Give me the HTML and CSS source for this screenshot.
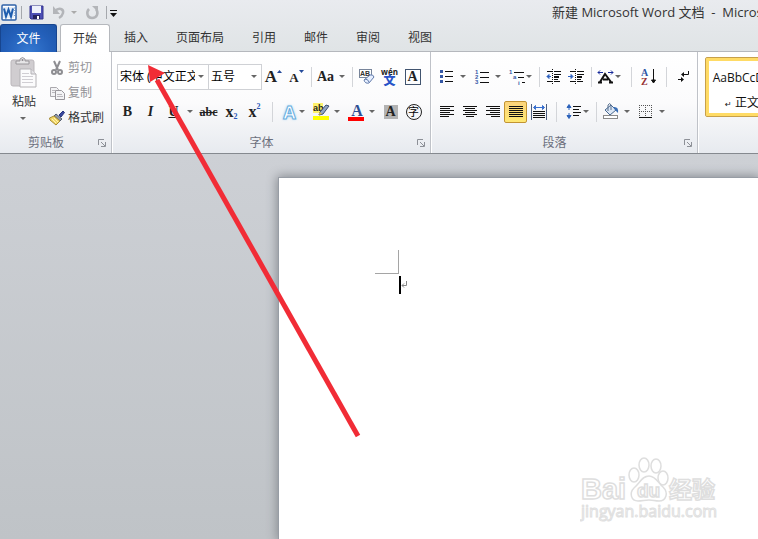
FILE: index.html
```html
<!DOCTYPE html>
<html lang="zh-CN">
<head>
    <meta charset="UTF-8">
    <meta name="viewport" content="width=device-width, initial-scale=1.0">
    <title>新建 Microsoft Word 文档</title>
    <link rel="stylesheet" href="styles.css">
</head>
<body>
<!-- Title bar with quick access tools -->
<header class="titlebar">
    <div class="quick">
        <svg class="app-icon" width="17" height="17" viewBox="0 0 17 17">
            <rect x="1" y="1" width="14" height="15" rx="1" fill="#fff" stroke="#2f62a8" stroke-width="1.5"/>
            <path d="M11 4h3M11 6.500h3M11 9h3M11 11.500h3" stroke="#7b9fcb"/>
            <rect x="2" y="3" width="11" height="11" fill="#e2ecf8"/>
            <path d="M3 4.500l2 8 2.500-7 2.500 7 2-8" fill="none" stroke="#1e5dae" stroke-width="2"/>
        </svg>
        <span class="quick-line"></span>
        <button class="quick-btn" aria-label="保存">
            <svg width="15" height="15" viewBox="0 0 15 15">
                <path d="M1 1h13v13H2l-1-1z" fill="#4c4fb5" stroke="#34348c"/>
                <rect x="3" y="1" width="9" height="7" fill="#eef1fb"/>
                <rect x="4" y="10" width="7" height="4" fill="#23235f"/>
                <rect x="8" y="11" width="2" height="3" fill="#fff"/>
            </svg>
        </button>
        <button class="quick-btn" aria-label="撤消">
            <svg width="15" height="15" viewBox="0 0 15 15">
                <path d="M4 6c4-4 9-2 8 2-.5 2-2 4-4 5" fill="none" stroke="#b3b5b9" stroke-width="2.500"/>
                <path d="M2 1v8h7z" fill="#b3b5b9"/>
            </svg>
        </button>
        <span class="caret light"></span>
        <button class="quick-btn" aria-label="重复">
            <svg width="15" height="15" viewBox="0 0 15 15">
                <path d="M4 4c-3 3-2 9 3 9s7-5 4-9" fill="none" stroke="#b3b5b9" stroke-width="2.500"/>
                <path d="M7 1h6v6z" fill="#b3b5b9"/>
            </svg>
        </button>
        <span class="quick-line"></span>
        <button class="quick-more" aria-label="自定义快速访问工具栏">
            <svg width="7" height="7" viewBox="0 0 7 7"><path d="M0 0h7v1H0zM0 3h7L3.500 7z" fill="#111"/></svg>
        </button>
    </div>
    <div class="doc-title">新建 Microsoft Word 文档 &nbsp;-&nbsp; Microsoft Word</div>
</header>

<!-- Ribbon tabs -->
<nav class="tabs">
    <button class="tab file">文件</button>
    <button class="tab active">开始</button>
    <button class="tab">插入</button>
    <button class="tab">页面布局</button>
    <button class="tab">引用</button>
    <button class="tab">邮件</button>
    <button class="tab">审阅</button>
    <button class="tab">视图</button>
</nav>

<div class="ribbon">
    <!-- Clipboard -->
    <section class="group clipboard">
        <div class="clip-body">
            <button class="paste">
                <svg width="28" height="32" viewBox="0 0 28 32">
                    <rect x="1" y="3" width="23" height="26" rx="2" fill="#d0cdd0" stroke="#bbb7bb"/>
                    <path d="M6 7V4h4V2q2.500-3 5 0v2h4v3z" fill="#e6e5e7" stroke="#99969a"/>
                    <circle cx="12.500" cy="3" r="1" fill="#8b888c"/>
                    <path d="M10 12h11l5 5v13H10z" fill="#fbfbfc" stroke="#b4b2b6"/>
                    <path d="M21 12v5h5" fill="#e5e4e8" stroke="#b4b2b6"/>
                    <path d="M12 16.500h7M12 19.500h11M12 22.500h11M12 25.500h11" stroke="#d0ced3"/>
                </svg>
                <span>粘贴</span>
                <i class="caret"></i>
            </button>
            <div class="clip-list">
                <button class="clip-item disabled">
                    <svg width="16" height="16" viewBox="0 0 16 16">
                        <path d="M5 1l4 9M11 1L7 10" stroke="#8e8e92" stroke-width="2"/>
                        <circle cx="5" cy="12" r="2" fill="none" stroke="#8e8e92" stroke-width="2"/>
                        <circle cx="11" cy="12" r="2" fill="none" stroke="#8e8e92" stroke-width="2"/>
                    </svg>
                    剪切
                </button>
                <button class="clip-item disabled">
                    <svg width="16" height="16" viewBox="0 0 16 16">
                        <path d="M1.500 2.500h6l2 2v7h-8z" fill="#f3f3f5" stroke="#aaa8ad"/>
                        <path d="M6.500 5.500h6l3 3v6h-9z" fill="#f3f3f5" stroke="#98969b"/>
                        <path d="M3 5.500h3M3 7.500h3M8 9.500h5M8 11.500h6" stroke="#b9b7bc"/>
                    </svg>
                    复制
                </button>
                <button class="clip-item">
                    <svg width="16" height="16" viewBox="0 0 16 16">
                        <path d="M10 5l4-4 1.500 1.500L12 7z" fill="#37479f" stroke="#28357e"/>
                        <path d="M7 4l6 5-2 2-6-5z" fill="#8f98a8" stroke="#555e6e"/>
                        <path d="M5 6l6 5-4 4-6-5-.5-2z" fill="#f2d767" stroke="#a58a35"/>
                        <path d="M3 9l4 4M5 8l4 4" stroke="#fff4b5"/>
                    </svg>
                    格式刷
                </button>
            </div>
        </div>
        <footer class="group-name"><span>剪贴板</span><svg width="8" height="8" viewBox="0 0 8 8"><path d="M.5 6V.5H6M3 3l4 4M7.500 3v4.500H3" fill="none" stroke="#8d9097"/></svg></footer>
    </section>

    <!-- Font -->
    <section class="group font">
        <div class="row">
            <label class="combo name">
                <select aria-label="字体"><option>宋体 (中文正文)</option></select>
            </label>
            <label class="combo size">
                <select aria-label="字号"><option>五号</option></select>
            </label>
            <button class="tool serif grow" aria-label="增大字体">A<svg width="5" height="3" viewBox="0 0 5 3"><path d="M0 3h5L2.500 0z" fill="#244a9a"/></svg></button>
            <button class="tool serif shrink" aria-label="缩小字体">A<svg width="5" height="3" viewBox="0 0 5 3"><path d="M0 0h5L2.500 3z" fill="#244a9a"/></svg></button>
            <span class="sep"></span>
            <button class="tool serif">Aa</button><i class="caret"></i>
            <span class="sep"></span>
            <button class="tool" aria-label="清除格式">
                <svg width="18" height="18" viewBox="0 0 18 18">
                    <rect x="1.500" y="1.500" width="12" height="8" fill="#fff" stroke="#78859b"/>
                    <text x="2" y="8" class="mini-label">AB</text>
                    <path d="M6 12l6-5q3-1 4 2l-5 6q-4 1-5-3z" fill="#e6efff" stroke="#6079aa"/>
                    <path d="M7 11q3 0 4 3" fill="none" stroke="#6079aa"/>
                </svg>
            </button>
            <button class="tool pinyin"><span>wén</span><b>文</b></button>
            <button class="tool serif"><span class="boxed">A</span></button>
        </div>
        <div class="row">
            <button class="tool serif">B</button>
            <button class="tool serif italic">I</button>
            <button class="tool serif underline">U</button><i class="caret"></i>
            <button class="tool serif strike">abc</button>
            <button class="tool serif script">x<sub>2</sub></button>
            <button class="tool serif script">x<sup>2</sup></button>
            <span class="sep wide"></span>
            <button class="tool glow">A</button><i class="caret tight"></i>
            <button class="tool" aria-label="突出显示">
                <svg width="18" height="18" viewBox="0 0 18 18">
                    <rect x="1" y="0" width="10" height="10" fill="#fff26b"/>
                    <text x="1" y="8" class="ab-label">ab</text>
                    <path d="M8 9l6-7 3 1-6 8-4 1z" fill="#93a6c4" stroke="#3c4f72"/>
                    <path d="M6 12l2-3 2 2z" fill="#d8b84e"/>
                    <rect x="1" y="13" width="16" height="4" fill="#ffff00"/>
                </svg>
            </button><i class="caret"></i>
            <button class="tool serif color">A</button><i class="caret"></i>
            <button class="tool serif"><span class="shaded">A</span></button>
            <button class="tool"><span class="ring">字</span></button>
        </div>
        <footer class="group-name"><span>字体</span><svg width="8" height="8" viewBox="0 0 8 8"><path d="M.5 6V.5H6M3 3l4 4M7.500 3v4.500H3" fill="none" stroke="#8d9097"/></svg></footer>
    </section>

    <!-- Paragraph -->
    <section class="group paragraph">
        <div class="row">
            <button class="tool" aria-label="项目符号">
                <svg width="15" height="15" viewBox="0 0 15 15">
                    <path d="M6 2.500h8M6 7.500h8M6 12.500h8" stroke="#111"/>
                    <path d="M1 1h3v3H1zM1 6h3v3H1zM1 11h3v3H1z" fill="#3558a6"/>
                </svg>
            </button><i class="caret"></i>
            <button class="tool" aria-label="编号">
                <svg width="16" height="16" viewBox="0 0 16 16">
                    <path d="M6 3.500h9M6 8.500h9M6 13.500h9" stroke="#111"/>
                    <text x="1" y="5" class="num-label">1</text>
                    <text x="1" y="10" class="num-label">2</text>
                    <text x="1" y="15" class="num-label">3</text>
                </svg>
            </button><i class="caret"></i>
            <button class="tool" aria-label="多级列表">
                <svg width="18" height="16" viewBox="0 0 18 16">
                    <path d="M6 3.500h10M10 8.500h6M14 13.500h3" stroke="#111"/>
                    <text x="1" y="5" class="num-label">1</text>
                    <text x="5" y="10" class="num-label">a</text>
                    <text x="10" y="16" class="num-label">i</text>
                </svg>
            </button><i class="caret tight"></i>
            <span class="sep"></span>
            <button class="tool" aria-label="减少缩进量">
                <svg width="17" height="15" viewBox="0 0 17 15">
                    <path d="M2 2.500h5M9 2.500h7M9 5.500h7M9 10.500h4M2 12.500h5M9 12.500h6" stroke="#111"/>
                    <path d="M9 8h5" stroke="#111" stroke-width="2"/>
                    <path d="M7.500 0v15" stroke="#111" stroke-dasharray="1 1"/>
                    <path d="M6 7.500H2M4 5.500l-2 2 2 2z" stroke="#2e62c0" fill="#2e62c0"/>
                </svg>
            </button>
            <button class="tool" aria-label="增加缩进量">
                <svg width="17" height="15" viewBox="0 0 17 15">
                    <path d="M2 2.500h5M9 2.500h7M9 5.500h7M9 10.500h4M2 12.500h5M9 12.500h6" stroke="#111"/>
                    <path d="M9 8h5" stroke="#111" stroke-width="2"/>
                    <path d="M7.500 0v15" stroke="#111" stroke-dasharray="1 1"/>
                    <path d="M0 7.500h4M3 5.500l2 2-2 2z" stroke="#2e62c0" fill="#2e62c0"/>
                </svg>
            </button>
            <span class="sep"></span>
            <button class="tool" aria-label="中文版式">
                <svg width="17" height="14" viewBox="0 0 17 14">
                    <path d="M1 12.500h4M12 12.500h4M3 12L8 4l6 8M6 9.500h5" fill="none" stroke="#111" stroke-width="2"/>
                    <path d="M1 2.500h5M11 2.500h5M3 .5l-2 2 2 2M14 .5l2 2-2 2" fill="none" stroke="#172a9a"/>
                </svg>
            </button><i class="caret tight"></i>
            <span class="sep wide"></span>
            <button class="tool" aria-label="排序">
                <svg width="16" height="18" viewBox="0 0 16 18">
                    <text x="0" y="8" class="sort-a">A</text>
                    <text x="0" y="17" class="sort-z">Z</text>
                    <path d="M12.500 1v13M10.500 12l2 3 2-3z" stroke="#111" fill="#111"/>
                </svg>
            </button>
            <span class="sep wide"></span>
            <button class="tool" aria-label="显示编辑标记">
                <svg width="12" height="13" viewBox="0 0 12 13">
                    <path d="M10.500 1v3.500H5M0 9.500h4" fill="none" stroke="#111"/>
                    <path d="M6 2v5L3 4.500zM3 7v5l3-2.500z" fill="#111"/>
                </svg>
            </button>
        </div>
        <div class="row">
            <button class="tool" aria-label="左对齐">
                <svg width="14" height="13" viewBox="0 0 14 13"><path d="M0 1.500h14M0 3.500h10M0 5.500h14M0 7.500h10M0 9.500h14M0 11.500h9" stroke="#111"/></svg>
            </button>
            <button class="tool" aria-label="居中">
                <svg width="14" height="13" viewBox="0 0 14 13"><path d="M0 1.500h14M2 3.500h10M0 5.500h14M2 7.500h10M0 9.500h14M3 11.500h8" stroke="#111"/></svg>
            </button>
            <button class="tool" aria-label="右对齐">
                <svg width="14" height="13" viewBox="0 0 14 13"><path d="M0 1.500h14M4 3.500h10M0 5.500h14M4 7.500h10M0 9.500h14M5 11.500h9" stroke="#111"/></svg>
            </button>
            <button class="tool pressed" aria-label="两端对齐">
                <svg width="14" height="13" viewBox="0 0 14 13"><path d="M0 1.500h14M0 3.500h14M0 5.500h14M0 7.500h14M0 9.500h14M0 11.500h14" stroke="#111"/></svg>
            </button>
            <button class="tool" aria-label="分散对齐">
                <svg width="16" height="16" viewBox="0 0 16 16">
                    <path d="M.5 0v16M15.500 0v16" stroke="#4d5f80"/>
                    <path d="M2 7.500h12M2 9.500h12M2 11.500h12M2 13.500h12" stroke="#111"/>
                    <path d="M3 3.500h10M4.500 1.500l-2 2 2 2zM11.500 1.500l2 2-2 2z" stroke="#3970cf" fill="#3970cf"/>
                </svg>
            </button>
            <span class="sep wide"></span>
            <button class="tool" aria-label="行距">
                <svg width="16" height="17" viewBox="0 0 16 17">
                    <path d="M7 3.500h8M7 6.500h6M7 9.500h8M7 12.500h6" stroke="#111"/>
                    <path d="M3 2v5M3 10v5M1 4.500L3 1.500l2 3zM1 12.500l2 3 2-3z" stroke="#2d63bb" fill="#2d63bb"/>
                </svg>
            </button><i class="caret tight"></i>
            <span class="sep"></span>
            <button class="tool" aria-label="底纹">
                <svg width="18" height="17" viewBox="0 0 18 17">
                    <path d="M3 7l6-5 5 5-6 5z" fill="#dce7f5" stroke="#47678f"/>
                    <path d="M6 8V2q2-3 3 0v5" fill="none" stroke="#58708f"/>
                    <path d="M11 4q6-1 5 6l-3-3z" fill="#3a6eb5"/>
                    <rect x="1.500" y="12.500" width="14" height="3" fill="#fff" stroke="#8a8a8a"/>
                </svg>
            </button><i class="caret"></i>
            <button class="tool" aria-label="边框">
                <svg width="14" height="14" viewBox="0 0 14 14">
                    <path d="M0 .5h13M0 6.500h13M.5 0v12M6.500 0v12M12.500 0v12" stroke="#555" stroke-dasharray="1 1"/>
                    <path d="M0 12.500h13" stroke="#111"/>
                </svg>
            </button><i class="caret"></i>
        </div>
        <footer class="group-name"><span>段落</span><svg width="8" height="8" viewBox="0 0 8 8"><path d="M.5 6V.5H6M3 3l4 4M7.500 3v4.500H3" fill="none" stroke="#8d9097"/></svg></footer>
    </section>

    <!-- Styles gallery -->
    <section class="gallery">
        <button class="style-card">
            <span class="sample">AaBbCcDd</span>
            <span class="style-name"><small>↵</small> 正文</span>
        </button>
    </section>
</div>

<!-- Document area -->
<main class="workspace">
    <div class="page">
        <div class="corner"></div>
        <div class="line">
            <span class="cursor"></span>
            <svg width="6" height="8" viewBox="0 0 6 8"><path d="M5.500 0v4.500H1M3 2.500l-2 2 2 2" fill="none" stroke="#888"/></svg>
        </div>
        <svg class="watermark" width="140" height="70" viewBox="0 0 140 70">
            <g fill="#fff" stroke="#dedede" stroke-width="1.500">
                <text x="1" y="44" class="wm-bai">Bai</text>
                <ellipse cx="54" cy="20" rx="5" ry="7"/>
                <ellipse cx="64" cy="10" rx="5" ry="7"/>
                <ellipse cx="76" cy="11" rx="5" ry="7"/>
                <ellipse cx="83" cy="23" rx="5" ry="7"/>
                <path d="M69 21c7 0 9 7 14 11 6 6 3 14-4 14-4 0-6-1-10-1s-7 1-11 1c-7 0-9-8-4-13 6-5 8-12 15-12z"/>
                <text x="57" y="42" class="wm-du">du</text>
                <text x="89" y="43" class="wm-cn">经验</text>
            </g>
            <text x="1" y="62" class="wm-url">jingyan.baidu.com</text>
        </svg>
    </div>
</main>

<!-- Arrow pointing at the insert tab -->
<svg class="pointer" width="220" height="380" viewBox="0 0 220 380">
    <path d="M14 18L215 374" stroke="#f12c36" stroke-width="5"/>
    <path d="M5 3l17 8L7 20z" fill="#f12c36"/>
</svg>
</body>
</html>
```
FILE: styles.css
```css
* {
    box-sizing: border-box;
}

body {
    margin: 0;
    height: 100vh;
    display: flex;
    flex-direction: column;
    overflow: hidden;
    position: relative;
    font-family: "Open Sans", "Noto Sans CJK SC", sans-serif;
    font-size: 12px;
    line-height: 16px;
    color: #333;
    background: linear-gradient(#e9ebef, #e0e4e6 50px);
}

button {
    padding: 0;
    border: none;
    background: none;
    font: inherit;
    color: inherit;
    white-space: nowrap;
}

svg {
    display: block;
    flex: none;
}

/* Title bar */
.titlebar {
    display: flex;
    justify-content: space-between;
    height: 24px;
}

.quick {
    flex: none;
    display: flex;
    align-items: center;
    padding-left: 1px;
}

.quick-line {
    width: 1px;
    height: 13px;
    margin: 0 3px;
    background: #a5a8ad;
}

.quick-btn {
    display: flex;
    justify-content: center;
    width: 22px;
}

.quick-more {
    padding-top: 2px;
}

.doc-title {
    flex: none;
    width: 206px;
    padding-top: 4px;
    font-size: 13px;
    white-space: nowrap;
    overflow: hidden;
}

/* Tabs */
.tabs {
    display: flex;
    height: 28px;
    border-bottom: 1px solid #b5b8bd;
}

.tab {
    height: 28px;
    padding: 0 14px;
}

.tab.file {
    width: 57px;
    margin-right: 3px;
    border: 1px solid #17458f;
    border-bottom: none;
    border-radius: 3px 3px 0 0;
    background: radial-gradient(ellipse at bottom, #3679d2, #235fb9 60%, #1d55a8);
    color: #fff;
}

.tab.active {
    padding: 0 12px;
    border: 1px solid #b5b8bd;
    border-bottom: none;
    border-radius: 3px 3px 0 0;
    background: #fff;
}

/* Ribbon */
.ribbon {
    flex: none;
    display: flex;
    height: 102px;
    overflow: hidden;
    background: linear-gradient(#fff, #fbfbfc 50%, #e7eaef);
    border-bottom: 1px solid #85898f;
}

.group {
    flex: none;
    display: flex;
    flex-direction: column;
    padding: 7px 5px 0 4px;
    border-right: 1px solid #bfc2c8;
    box-shadow: 1px 0 #fff;
}

.clipboard {
    width: 112px;
    padding-top: 5px;
}

.font {
    width: 319px;
}

.paragraph {
    width: 267px;
}

.group-name {
    display: flex;
    align-items: center;
    gap: 10px;
    height: 20px;
    margin-top: auto;
    color: #6b6f7c;
}

.group-name span {
    flex: 1;
    text-align: center;
}

.caret {
    flex: none;
    width: 12px;
    padding-left: 2px;
}

.caret.tight {
    margin-left: -4px;
}

.caret::before,
.combo::after {
    content: "";
    display: block;
    flex: none;
    width: 0;
    border: solid transparent;
    border-width: 3px 3px 0;
    border-top-color: #666;
}

.caret.light::before {
    border-top-color: #aaa;
}

/* Clipboard */
.clip-body {
    display: flex;
    gap: 5px;
}

.paste {
    display: flex;
    flex-direction: column;
    align-items: center;
    width: 40px;
    gap: 5px;
}

.paste .caret {
    margin-top: 2px;
}

.clip-list {
    display: flex;
    flex-direction: column;
    gap: 9px;
    padding-top: 3px;
}

.clip-item {
    display: flex;
    align-items: center;
    gap: 3px;
}

.clip-item.disabled {
    color: #929296;
}

/* Tool rows */
.row {
    display: flex;
    align-items: center;
    height: 35px;
}

.combo {
    flex: none;
    display: flex;
    align-items: center;
    height: 26px;
    padding-right: 4px;
    border: 1px solid #cfd1d5;
    background: #fff;
}

.combo.name {
    width: 92px;
    margin-left: 1px;
}

.combo.size {
    width: 54px;
    margin-left: -1px;
}

.combo select {
    flex: 1;
    min-width: 0;
    margin-right: 3px;
    padding: 0 0 0 2px;
    border: none;
    appearance: none;
    background: none;
    font: inherit;
    color: #000;
}

.tool {
    flex: none;
    display: flex;
    align-items: center;
    justify-content: center;
    width: 23px;
    height: 22px;
}

.sep {
    flex: none;
    width: 6px;
    height: 20px;
    background: linear-gradient(#d3d5d9, #d3d5d9) center / 1px 100% no-repeat;
}

.sep.wide {
    width: 12px;
}

.serif {
    font-family: "Liberation Serif", serif;
    font-size: 14px;
    font-weight: bold;
    color: #222;
}

.grow,
.shrink {
    align-items: flex-start;
}

.grow {
    font-size: 17px;
    line-height: 22px;
}

.grow svg,
.shrink svg {
    margin-top: 4px;
}

.shrink {
    font-size: 13px;
    line-height: 24px;
}

.italic {
    font-style: italic;
}

.underline {
    text-decoration: underline;
}

.strike {
    font-size: 12px;
    text-decoration: line-through;
}

.script {
    font-size: 16px;
}

.script sub,
.script sup {
    font-size: 8px;
    line-height: 8px;
    color: #2858b8;
}

.script sub {
    align-self: flex-end;
    padding-bottom: 2px;
}

.script sup {
    align-self: flex-start;
    padding-top: 2px;
}

.glow {
    font-size: 18px;
    font-weight: bold;
    color: #fff;
    -webkit-text-stroke: 1px #68aedf;
    text-shadow: 0 0 3px #6ebcec;
}

.color::before {
    content: "";
    align-self: flex-end;
    width: 16px;
    height: 4px;
    margin-right: -13px;
    background: #f00;
}

.color {
    color: #2e4f94;
    font-size: 16px;
    line-height: 12px;
    padding-bottom: 2px;
}

.boxed {
    width: 16px;
    border: 1px solid #41546f;
    line-height: 14px;
    text-align: center;
}

.shaded {
    width: 14px;
    background: #b3b3b3;
    line-height: 14px;
    text-align: center;
}

.ring {
    width: 16px;
    height: 16px;
    border: 1px solid #222;
    border-radius: 50%;
    font-size: 11px;
    line-height: 13px;
    text-align: center;
    color: #000;
}

.pinyin {
    flex-direction: column;
    font-size: 8px;
    line-height: 7px;
    font-weight: bold;
    color: #222;
}

.pinyin b {
    font-size: 12px;
    line-height: 11px;
    color: #2854c8;
}

.pressed {
    border: 1px solid #c29433;
    border-radius: 2px;
    background: linear-gradient(#fcd47c, #ffe873);
}

.mini-label {
    font: bold 7px "Liberation Sans", sans-serif;
    fill: #333;
}

.ab-label {
    font: bold 9px "Liberation Sans", sans-serif;
    fill: #222;
}

.num-label {
    font: bold 6px "Liberation Sans", sans-serif;
    fill: #3558a6;
}

.sort-a,
.sort-z {
    font: bold 10px "Liberation Serif", serif;
    fill: #2d55a5;
}

.sort-z {
    fill: #963034;
}

/* Styles gallery */
.gallery {
    flex: 1;
    min-width: 0;
    padding: 5px 0 0 7px;
}

.style-card {
    display: flex;
    flex-direction: column;
    align-items: center;
    gap: 9px;
    width: 74px;
    height: 60px;
    padding-top: 12px;
    border: 1px solid #c7a04a;
    border-radius: 2px;
    background: #fff;
    box-shadow: inset 0 0 0 3px #ffdb65;
    color: #111;
}

.style-name small {
    font-family: "DejaVu Sans", sans-serif;
    font-size: 8px;
}

/* Document */
.workspace {
    flex: 1;
    display: flex;
    min-height: 0;
    padding: 24px 0 0 279px;
    background: linear-gradient(#cdd0d5, #bfc3c7);
}

.page {
    flex: 1;
    position: relative;
    padding: 72px 0 0 96px;
    background: #fff;
    box-shadow: 0 0 0 1px #979da5, 0 0 10px 2px #85898f;
}

.corner {
    width: 24px;
    height: 24px;
    border: solid #a5a5a5;
    border-width: 0 1px 1px 0;
}

.line {
    display: flex;
    align-items: center;
    margin: 2px 0 0 24px;
}

.cursor {
    width: 2px;
    height: 18px;
    background: #000;
}

.watermark {
    position: absolute;
    right: 38px;
    bottom: 14px;
}

.wm-bai {
    font: bold 29px "Liberation Sans", sans-serif;
}

.wm-du {
    font: bold 19px "Liberation Sans", sans-serif;
}

.wm-cn {
    font: bold 23px "Noto Sans CJK SC", sans-serif;
}

.wm-url {
    font: 16px "Open Sans", sans-serif;
    fill: #fff;
    stroke: #e0e0e0;
}

.pointer {
    position: absolute;
    left: 143px;
    top: 62px;
    pointer-events: none;
}
```
